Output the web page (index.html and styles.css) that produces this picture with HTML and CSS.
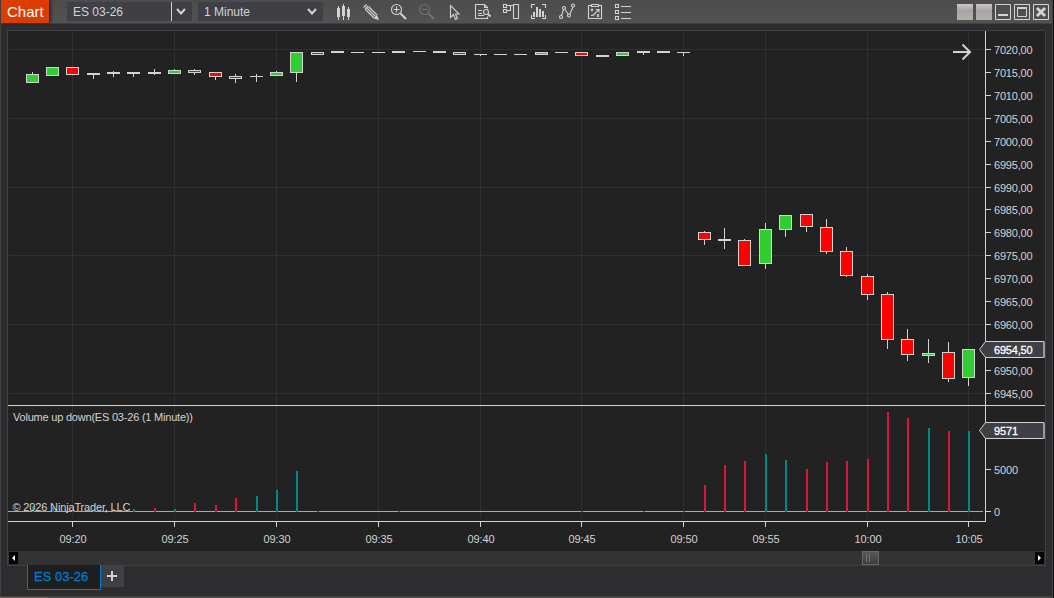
FILE: index.html
```html
<!DOCTYPE html>
<html lang="en">
<head>
    <meta charset="UTF-8">
    <meta name="viewport" content="width=device-width, initial-scale=1.0">
    <title>Chart - ES 03-26</title>
    <link rel="stylesheet" href="styles.css">
</head>
<body>
    <div class="window">
        <header class="toolbar">
            <div class="title">Chart</div>
            <div class="combo combo-symbol">
                <span class="combo-text">ES 03-26</span>
                <svg class="chevron" viewBox="0 0 10 7"><path d="M1 1l4 4.5L9 1"/></svg>
            </div>
            <div class="combo combo-interval">
                <span class="combo-text">1 Minute</span>
                <svg class="chevron" viewBox="0 0 10 7"><path d="M1 1l4 4.5L9 1"/></svg>
            </div>
            <nav class="tools">
                <svg class="tool" viewBox="0 0 28 24"><path class="solid" d="M7 8h3v9H7zM8 6h1v14H8zM12 6h3v10h-3zM13 4h1v16h-1zM17 9h3v8h-3zM18 7h1v13h-1z"/></svg>
                <svg class="tool" viewBox="0 0 28 24"><path d="M5.500 7.500l3-3M7 9l3-3M7.500 9.500l8.500 8.500M10.500 6.500l8.500 8.500M9 8l8.500 8.500"/><path class="solid" d="M15.500 18.500l3.500-3.500 2 5z"/></svg>
                <svg class="tool" viewBox="0 0 28 24"><circle cx="10.500" cy="9.500" r="5"/><path d="M7.500 9.500h6M10.500 6.500v6"/><path class="thick" d="M14.500 13.500l5.500 5.500"/></svg>
                <svg class="tool tool-off" viewBox="0 0 28 24"><circle cx="10.500" cy="9.500" r="5"/><path d="M7.500 9.500h6"/><path class="thick" d="M14.500 13.500l5.500 5.500"/></svg>
                <svg class="tool" viewBox="0 0 28 24"><path d="M8.500 5.500v12l3-3 2 5 2-1-2-4.500h3.500z"/></svg>
                <svg class="tool" viewBox="0 0 28 24"><path d="M17.500 8.500v-1l-3-3h-9v14h12v-2M14.500 4.500v3h3M8 10.500h4M8 13.500h4M8 15.500h6"/><circle cx="16" cy="12" r="2.500"/><path class="thick" d="M18 14l2.500 2.500"/></svg>
                <svg class="tool" viewBox="0 0 28 24"><path d="M5.500 4.500h3v3h-3zM5.500 9.500h3v3h-3zM9 5.500h7M9 10.500h3.500v-5M15.500 4.500h5v14h-5z"/></svg>
                <svg class="tool" viewBox="0 0 28 24"><path d="M5.500 8V4.500H9M16 4.500h3.500V8M5.500 15v3.500H9M16 18.500h3.500V15"/><path class="solid" d="M7 12h2v5H7zM10 7h2v10h-2zM13 9h2v8h-2zM16 11h2v6h-2z"/></svg>
                <svg class="tool" viewBox="0 0 28 24"><path d="M7.500 15.500l2-6M11 9.500l3.500 5M16 14l3-7"/><circle cx="7" cy="17" r="1.500"/><circle cx="10" cy="8" r="1.500"/><circle cx="15" cy="15.500" r="1.500"/><circle cx="19" cy="5.500" r="1.500"/></svg>
                <svg class="tool" viewBox="0 0 28 24"><path d="M9 5.500H6.500v13h13v-13H17M9.500 4.500h7v2h-7zM9 15.500c3 0 4-1.500 4.500-3l3-2.500M14 9.500h3v3M9 9l2 2M11 9l-2 2M15 14.500l2 2M17 14.500l-2 2"/></svg>
                <svg class="tool" viewBox="0 0 28 24"><path d="M5.500 4.500h3v3h-3zM5.500 10.500h3v3h-3zM5.500 16.500h3v3h-3zM11 6.500h10M11 12.500h10M11 18.500h10"/></svg>
            </nav>
            <div class="window-buttons">
                <span class="link-button"></span>
                <span class="link-button"></span>
                <svg class="window-button" viewBox="0 0 16 16"><path d="M.5.5h15v15H.5z"/><path class="thick" d="M3 11h10"/></svg>
                <svg class="window-button" viewBox="0 0 16 16"><path d="M.5.5h15v15H.5zM3.500 4.500h9v8h-9z"/><path d="M3 3.500h10"/></svg>
                <svg class="window-button" viewBox="0 0 16 16"><path d="M.5.5h15v15H.5z"/><path class="cross" d="M4 4l8 8M12 4l-8 8"/></svg>
            </div>
        </header>

        <main class="panel">
            <svg class="chart" id="chart" viewBox="8 31 1037 520">
                <g id="grid" class="grid"></g>
                <path class="zero" d="M8 511.500h975"/>
                <g id="volume"></g>
                <g id="candles"></g>
                <path class="axis" d="M985.500 31v491M8 405.500h1037M8 521.500h978"/>
                <g id="axes"></g>
                <text class="label" x="13" y="421" textLength="180">Volume up down(ES 03-26 (1 Minute))</text>
                <text class="label" x="12.500" y="511" textLength="118">© 2026 NinjaTrader, LLC</text>
                <path class="arrow" d="M953 52h17M962.500 44.500l7.500 7.500-7.500 7.500"/>
                <g id="markers"></g>
            </svg>
            <div class="scrollbar">
                <span class="scroll-button"><svg viewBox="0 0 9 12"><path d="M6 3v6L3 6z"/></svg></span>
                <span class="scroll-track"><span class="scroll-thumb"></span></span>
                <span class="scroll-button"><svg viewBox="0 0 9 12"><path d="M3 3v6l3-3z"/></svg></span>
            </div>
        </main>

        <footer class="tabs">
            <div class="tab">ES 03-26</div>
            <div class="tab-add"><svg viewBox="0 0 10 10"><path d="M0 5h10M5 0v10"/></svg></div>
        </footer>
        <div class="bottom-edge"></div>
    </div>

    <script>
        // left, body top, body bottom, high, low, direction
        const candles = [
            [26, 74, 83, 72, 83, 'up'], [46, 67, 76, 67, 76, 'up'], [66, 67, 75, 67, 75, 'down'],
            [87, 73, 75, 73, 79, 'flat'], [107, 72, 74, 71, 77, 'flat'], [127, 72, 74, 72, 77, 'flat'],
            [148, 72, 74, 69, 75, 'flat'], [168, 70, 74, 69, 74, 'up'], [188, 70, 73, 69, 75, 'down'],
            [209, 72, 77, 72, 80, 'down'], [229, 76, 79, 74, 83, 'down'], [250, 76, 77, 74, 82, 'flat'],
            [270, 72, 76, 71, 76, 'up'], [290, 52, 73, 52, 82, 'up'], [311, 52, 55, 52, 55, 'down'],
            [331, 51, 53, 51, 53, 'flat'], [351, 52, 53, 52, 53, 'flat'], [372, 52, 53, 52, 53, 'flat'],
            [392, 51, 53, 51, 53, 'flat'], [413, 51, 52, 51, 52, 'flat'], [433, 51, 53, 51, 53, 'flat'],
            [453, 52, 55, 52, 55, 'down'], [474, 54, 55, 54, 56, 'flat'], [494, 54, 55, 54, 55, 'flat'],
            [514, 54, 55, 54, 55, 'flat'], [535, 52, 55, 52, 55, 'up'], [555, 52, 53, 52, 53, 'flat'],
            [575, 52, 56, 52, 56, 'down'], [596, 55, 57, 55, 57, 'flat'], [616, 52, 56, 52, 56, 'up'],
            [637, 51, 53, 51, 55, 'flat'], [657, 51, 53, 51, 53, 'flat'], [677, 52, 53, 52, 56, 'flat'],
            [698, 232, 240, 231, 245, 'down'], [718, 239, 241, 228, 249, 'flat'], [738, 240, 266, 239, 266, 'down'],
            [759, 229, 264, 223, 269, 'up'], [779, 215, 230, 215, 237, 'up'], [800, 214, 227, 214, 232, 'down'],
            [820, 227, 252, 219, 254, 'down'], [840, 251, 276, 247, 277, 'down'], [861, 276, 295, 274, 300, 'down'],
            [881, 294, 340, 292, 349, 'down'], [901, 339, 355, 329, 361, 'down'], [922, 353, 356, 339, 363, 'up'],
            [942, 352, 379, 342, 382, 'down'], [962, 349, 378, 349, 386, 'up']
        ];

        // left, top, direction
        const volume = [
            [32, 506, 'up'], [52, 507, 'up'], [72, 510, 'down'], [93, 510, 'up'], [113, 509, 'up'],
            [133, 509, 'up'], [154, 508, 'down'], [174, 509, 'up'], [194, 503, 'down'], [215, 505, 'down'],
            [235, 498, 'down'], [256, 496, 'up'], [276, 490, 'up'], [296, 471, 'up'], [317, 511, 'down'],
            [398, 511, 'up'], [581, 511, 'down'], [643, 511, 'up'], [683, 511, 'up'],
            [704, 485, 'down'], [724, 465, 'down'], [744, 461, 'down'], [765, 454, 'up'], [785, 460, 'up'],
            [806, 469, 'down'], [826, 462, 'down'], [846, 461, 'down'], [867, 459, 'down'], [887, 412, 'down'],
            [907, 418, 'down'], [928, 428, 'up'], [948, 431, 'down'], [968, 431, 'up']
        ];

        const times = [
            [72, '09:20'], [174, '09:25'], [276, '09:30'], [378, '09:35'], [480, '09:40'],
            [581, '09:45'], [683, '09:50'], [765, '09:55'], [867, '10:00'], [968, '10:05']
        ];

        const rect = (x, y, w, h, cls) => `<rect x="${x}" y="${y}" width="${w}" height="${h}" class="${cls}"/>`;
        const fill = (id, html) => { document.getElementById(id).innerHTML = html; };

        fill('grid',
            times.map(([x]) => rect(x, 31, 1, 487, 'line')).join('') +
            [49, 118, 187, 255, 324, 393].map(y => rect(9, y, 975, 1, 'line')).join(''));

        fill('candles', candles.map(([x, top, bottom, high, low, dir]) =>
            rect(x + 6, high, 1, low - high, 'outline') +
            rect(x, top, 13, bottom - top, 'outline') +
            (dir === 'flat' ? '' : rect(x + 1, top + 1, 11, bottom - top - 2, 'body-' + dir))
        ).join(''));

        fill('volume', volume.map(([x, top, dir]) => rect(x, top, 2, 512 - top, 'volume-' + dir)).join(''));

        let axes = '';
        for (let i = 0; i <= 15; i++) {
            const y = Math.round(49 + i * 22.92);
            const price = 7020 - i * 5;
            if (price === 6955) continue;
            axes += rect(986, y, 5, 1, 'outline') +
                `<text class="label" x="994" y="${y + 5}" textLength="38.500">${price},00</text>`;
        }
        axes += rect(986, 469, 5, 1, 'outline') + '<text class="label" x="994" y="474" textLength="24">5000</text>';
        axes += rect(986, 511, 5, 1, 'outline') + '<text class="label" x="994" y="516">0</text>';
        times.forEach(([x, text]) => {
            axes += rect(x, 522, 1, 5, 'outline') +
                `<text class="label time" x="${x + 1}" y="543" textLength="27">${text}</text>`;
        });
        fill('axes', axes);

        fill('markers', [[350, '6954,50', 38.5], [431, '9571', 24]].map(([y, text, width]) =>
            `<path class="marker" d="M979.500 ${y - .5}l6-8h58.500v16h-58.500z"/>` +
            rect(1043, y - 8, 2, 16, 'marker-edge') +
            `<text class="label marker-text" x="994" y="${y + 4}" textLength="${width}">${text}</text>`
        ).join(''));
    </script>
</body>
</html>
```
FILE: styles.css
```css
:root {
    --panel: #2d2d30;
    --border: #3f3f46;
    --plot: #222222;
    --light: #d3d3d3;
}

* {
    box-sizing: border-box;
}

body {
    margin: 0;
    background: #111;
    font-family: "Liberation Sans", Arial, sans-serif;
    font-size: 12px;
    color: var(--light);
    overflow: hidden;
}

.window {
    display: flex;
    flex-direction: column;
    width: 1053px;
    height: 598px;
    background: var(--panel);
    border-left: 1px solid var(--border);
    border-right: 1px solid var(--border);
}

.toolbar {
    display: flex;
    align-items: flex-start;
    height: 24px;
    background: linear-gradient(#4c4c4c, #525252);
    border-bottom: 1px solid var(--border);
}

.title {
    width: 48px;
    height: 23px;
    padding-left: 6px;
    background: #dc3c00;
    box-shadow: 2px 0 3px rgba(0, 0, 0, 0.5);
    color: white;
    font-size: 15px;
    line-height: 24px;
}

.combo {
    display: flex;
    align-items: center;
    justify-content: space-between;
    width: 125px;
    height: 19px;
    margin-top: 2px;
    padding: 0 6px;
    background: var(--border);
}

.combo-symbol {
    margin-left: 18px;
}

.combo-interval {
    margin-left: 6px;
}

.combo-symbol .combo-text {
    width: 99px;
    height: 19px;
    border-right: 1px solid var(--light);
    line-height: 20px;
}

.chevron {
    width: 10px;
    height: 7px;
    fill: none;
    stroke: var(--light);
    stroke-width: 2;
}

.tools {
    display: flex;
    margin-left: 7px;
}

.tool {
    width: 28px;
    height: 24px;
    fill: none;
    stroke: var(--light);
    stroke-width: 1.1;
}

.tool-off {
    opacity: 0.25;
}

.solid {
    fill: var(--light);
    stroke: none;
}

.thick {
    stroke-width: 2;
}

.cross {
    stroke-width: 3;
}

.window-buttons {
    display: flex;
    gap: 3px;
    margin: 4px 3px 0 auto;
}

.link-button,
.window-button {
    width: 16px;
    height: 16px;
}

.link-button {
    background: linear-gradient(#c8c8c8, #aaa5a5 40%, #b4afaf);
}

.window-button {
    fill: none;
    stroke: var(--light);
}

.panel {
    width: 1039px;
    height: 536px;
    margin: 6px 0 0 6px;
    background: var(--plot);
    border: 1px solid var(--border);
}

.chart {
    display: block;
    width: 1037px;
    height: 520px;
    shape-rendering: crispEdges;
}

.line {
    fill: #303030;
}

.outline {
    fill: var(--light);
}

.body-up {
    fill: #32cd32;
}

.body-down {
    fill: #ff0000;
}

.volume-up {
    fill: #008b8b;
}

.volume-down {
    fill: #dc143c;
}

.axis {
    stroke: var(--light);
}

.zero {
    stroke: #a9a9a9;
}

.label {
    fill: var(--light);
    font-size: 11px;
}

.time {
    text-anchor: middle;
}

.arrow {
    fill: none;
    stroke: var(--light);
    stroke-width: 2;
    shape-rendering: auto;
}

.marker {
    fill: var(--border);
    stroke: var(--light);
    shape-rendering: auto;
}

.marker-edge {
    fill: #999;
}

.marker-text {
    fill: white;
    stroke: white;
    stroke-width: 0.3;
}

.scrollbar {
    display: flex;
    height: 14px;
    padding: 0 1px;
    background: #333;
}

.scroll-button {
    width: 9px;
    height: 12px;
    margin-top: 1px;
    background: black;
}

.scroll-button svg {
    display: block;
    fill: white;
}

.scroll-track {
    flex: 1;
    padding-left: 844px;
}

.scroll-thumb {
    display: block;
    width: 17px;
    height: 14px;
    border: 1px solid #686868;
    background:
        linear-gradient(#777, #777) 3px 2px / 1px 8px no-repeat,
        linear-gradient(#777, #777) 6px 2px / 1px 8px no-repeat,
        linear-gradient(#585858, #3c3c3c);
}

.tabs {
    display: flex;
    height: 30px;
    padding-left: 26px;
}

.tab {
    width: 74px;
    height: 25px;
    margin-top: -1px;
    padding-left: 6px;
    background: #1e1e1e;
    border: 1px solid #007acc;
    border-top: none;
    color: #007acc;
    font-size: 13px;
    line-height: 23px;
    -webkit-text-stroke: 0.3px #007acc;
}

.tab-add {
    display: flex;
    align-items: center;
    justify-content: center;
    width: 23px;
    height: 21px;
    padding: 0 1px 1px 0;
    background: var(--border);
}

.tab-add svg {
    width: 10px;
    height: 10px;
    stroke: var(--light);
    stroke-width: 2;
}

.bottom-edge {
    height: 2px;
    margin-left: -1px;
    border-top: 1px solid #3f3f46;
    background: linear-gradient(90deg, #dc3c00 48px, #4c4c4c 48px);
}
```
